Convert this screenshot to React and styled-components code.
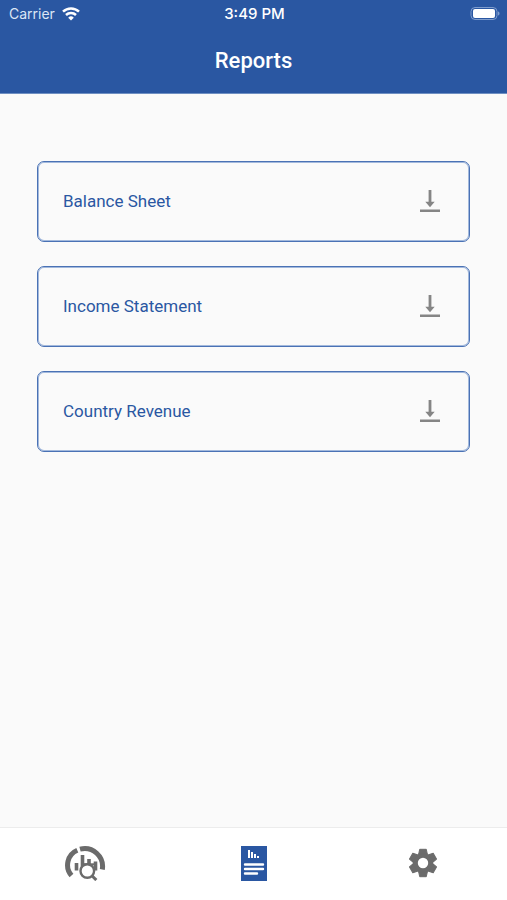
import React from 'react';
import styled, { createGlobalStyle } from 'styled-components';

const GlobalStyle = createGlobalStyle`
  * {
    box-sizing: border-box;
  }

  body {
    margin: 0;
    background-color: #fafafa;
    font-family: Roboto, 'Liberation Sans', sans-serif;
  }
`;

const Screen = styled.div`
  min-height: 100vh;
  display: flex;
  flex-direction: column;
`;

// blue area on top: status bar + title
const Header = styled.header`
  background-color: #2a57a2;
  color: #fff;
  border-bottom: 1px solid #6f8fc2;
`;

const StatusBar = styled.div`
  display: grid;
  grid-template-columns: 1fr auto 1fr;
  align-items: center;
  height: 28px;
  padding: 0 7px 0 9px;
  font-family: Inter, 'Liberation Sans', sans-serif;
  font-size: 14px;
  line-height: 20px;
`;

const Carrier = styled.div`
  display: flex;
  align-items: center;
  gap: 7px;
  color: #dce6f5;
`;

const Time = styled.span`
  font-size: 15px;
  font-weight: 500;
`;

const Battery = styled.svg`
  justify-self: end;
`;

const Title = styled.h1`
  margin: 0;
  padding: 17px 0 16px;
  font-size: 22px;
  line-height: 32px;
  font-weight: 500;
  text-align: center;
`;

const ReportList = styled.main`
  flex: 1;
  display: flex;
  flex-direction: column;
  gap: 24px;
  padding: 67px 37px 24px;
`;

const ReportCard = styled.div`
  display: flex;
  align-items: center;
  justify-content: space-between;
  height: 81px;
  padding: 0 24px 2px 25px;
  border: 1px solid #4a72b5;
  border-radius: 7px;
  box-shadow: inset 0 0 0 1px #a3b9dc;
`;

const ReportName = styled.span`
  color: #2a57a2;
  font-size: 17px;
  line-height: 24px;
`;

const DownloadButton = styled.button`
  display: flex;
  justify-content: center;
  width: 30px;
  padding: 0;
  border: none;
  background: none;
  color: #858585;
  cursor: pointer;
`;

const TabBar = styled.nav`
  position: sticky;
  bottom: 0;
  display: flex;
  height: 73px;
  padding-bottom: 2px;
  border-top: 1px solid #ececec;
  background-color: #fff;
`;

const Tab = styled.a`
  flex: 1;
  display: flex;
  align-items: center;
  justify-content: center;
  color: ${({ $active }) => ($active ? '#2a57a2' : '#6b6b6b')};
`;

const WifiIcon = () => (
  <svg width="18" height="14" viewBox="0 0 18 14" fill="none" stroke="#fff" strokeWidth="2.5">
    <path d="M1 4.700a11.600 11.600 0 0 1 16 0" />
    <path d="M4 8a7.200 7.200 0 0 1 10 0" />
    <path d="M9 13.500L6.200 10.700a4 4 0 0 1 5.600 0z" fill="#fff" stroke="none" />
  </svg>
);

const BatteryIcon = () => (
  <Battery width="30" height="14" viewBox="0 0 30 14">
    <rect x="1" y="0.5" width="26" height="12" rx="4" fill="none" stroke="#7f9dcd" />
    <rect x="3" y="2" width="22" height="9" rx="2" fill="#fff" />
    <path d="M28 4.500c2 .6 2 3.400 0 4z" fill="#7f9dcd" />
  </Battery>
);

const DownloadIcon = () => (
  <svg width="20" height="24" viewBox="0 0 20 24" fill="currentColor">
    <path d="M8.600 1h2.800v11.800h3.300L10 18.300 5.300 12.800h3.300z" />
    <path d="M0 20.500h20v2.500H0z" />
  </svg>
);

const DashboardIcon = () => (
  <svg width="42" height="36" viewBox="0 0 42 36" fill="none" stroke="currentColor">
    <path d="M7.500 30.500A16 16 0 0 1 13.300 5.300" strokeWidth="5" />
    <path d="M16 4.100A18 18 0 0 1 38.300 24.500" strokeWidth="5" />
    <path d="M12.500 18v7.500M18.500 10v13M25 14v8M31.500 16.500v9" strokeWidth="3.600" />
    <path d="M18 19.300h12" strokeWidth="2" />
    <circle cx="23.300" cy="26" r="6.800" fill="#fff" strokeWidth="2.400" />
    <path d="M28 30.800l4.300 4.300" strokeWidth="3" />
  </svg>
);

const ReportIcon = () => (
  <svg width="26" height="35" viewBox="0 0 26 35">
    <path d="M0 0h26v35H0z" fill="currentColor" />
    <path d="M7 4h2v8H7zM10 6h2v6h-2zM13 8h2v4h-2zM16 10h2v2h-2z" fill="#fff" />
    <path
      d="M4 18.500h18M4 23h18M4 27.500h12"
      stroke="#fff"
      strokeWidth="2.400"
      strokeLinecap="round"
    />
  </svg>
);

// one tooth of the gear, repeated every 60 degrees
const toothAngles = [0, 60, 120, 180, 240, 300];

const SettingsIcon = () => (
  <svg width="30" height="30" viewBox="-15 -15 30 30" fill="currentColor" stroke="currentColor">
    <circle r="7.700" fill="none" strokeWidth="5" />
    {toothAngles.map((angle) => (
      <path
        key={angle}
        d="M-4.300 -9L-3.300 -13.700H3.300L4.300 -9z"
        strokeWidth="1"
        strokeLinejoin="round"
        transform={`rotate(${angle})`}
      />
    ))}
  </svg>
);

const reports = ['Balance Sheet', 'Income Statement', 'Country Revenue'];

function App() {
  return (
    <Screen>
      <GlobalStyle />
      <Header>
        <StatusBar>
          <Carrier>
            Carrier
            <WifiIcon />
          </Carrier>
          <Time>3:49 PM</Time>
          <BatteryIcon />
        </StatusBar>
        <Title>Reports</Title>
      </Header>

      <ReportList>
        {reports.map((name) => (
          <ReportCard key={name}>
            <ReportName>{name}</ReportName>
            <DownloadButton type="button" aria-label={`Download ${name}`}>
              <DownloadIcon />
            </DownloadButton>
          </ReportCard>
        ))}
      </ReportList>

      <TabBar>
        <Tab href="#dashboard" aria-label="Dashboard">
          <DashboardIcon />
        </Tab>
        <Tab href="#reports" aria-label="Reports" aria-current="page" $active>
          <ReportIcon />
        </Tab>
        <Tab href="#settings" aria-label="Settings">
          <SettingsIcon />
        </Tab>
      </TabBar>
    </Screen>
  );
}

export default App;
